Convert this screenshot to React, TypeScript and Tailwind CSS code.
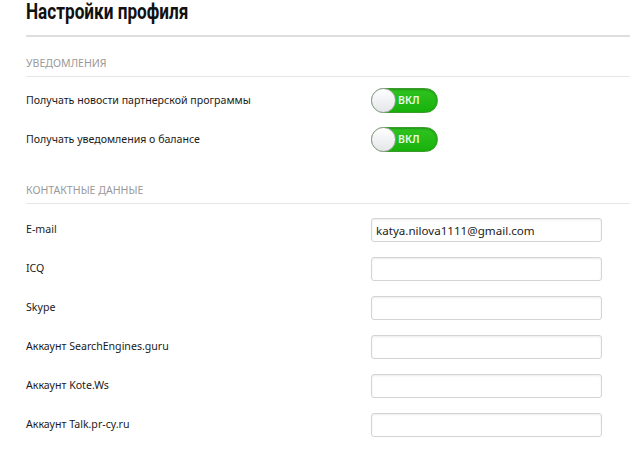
const fields = [
  { label: "E-mail", value: "katya.nilova1111@gmail.com" },
  { label: "ICQ", value: "" },
  { label: "Skype", value: "" },
  { label: "Аккаунт SearchEngines.guru", value: "" },
  { label: "Аккаунт Kote.Ws", value: "" },
  { label: "Аккаунт Talk.pr-cy.ru", value: "" },
];

function Toggle() {
  return (
    <div className="relative w-[67px] h-[25px] rounded-full border border-[#3a9a2c] bg-gradient-to-b from-[#2fc41f] to-[#17b10a] shadow-[inset_0_1px_2px_rgba(0,0,0,0.25)]">
      <div className="absolute left-[-1px] top-[-1px] w-[25px] h-[25px] rounded-full border border-[#9aa49a] bg-gradient-to-b from-[#ffffff] to-[#e4e6e8]" />
      <span className="absolute left-[26px] top-0 h-full flex items-center text-[10.5px] font-semibold text-[#eefbe8]">
        ВКЛ
      </span>
    </div>
  );
}

export default function App() {
  return (
    <div className="w-[630px] h-[470px] overflow-hidden bg-white pl-[26px] text-[#222] font-['Noto_Sans',sans-serif]">
      {/* Header */}
      <h1 className="h-[22px] text-[22px] leading-[23px] font-bold text-[#111] font-['Roboto',sans-serif]">
        <span className="inline-block origin-left scale-x-[0.78]">Настройки профиля</span>
      </h1>
      <div className="mt-[13px] h-[2px] bg-[#dedede]" />

      {/* Notifications */}
      <div className="pt-[19px] pb-[6px] text-[10.6px] leading-[14px] uppercase text-[#9a9a9a]">
        Уведомления
      </div>
      <div className="h-px bg-[#e6e6e6]" />
      <div className="mt-[11px] flex flex-col gap-[14px]">
        {["Получать новости партнерской программы", "Получать уведомления о балансе"].map((t) => (
          <div key={t} className="flex items-center h-[25px]">
            <div className="w-[345px] text-[10.6px] text-[#1a1a1a]">{t}</div>
            <Toggle />
          </div>
        ))}
      </div>

      {/* Contacts */}
      <div className="pt-[31px] pb-[6px] text-[10.6px] leading-[14px] uppercase text-[#9a9a9a]">
        Контактные данные
      </div>
      <div className="h-px bg-[#e6e6e6]" />
      <div className="mt-[14px] flex flex-col gap-[15px]">
        {fields.map((f) => (
          <div key={f.label} className="flex items-center h-[24px]">
            <div className="w-[345px] text-[10.6px] text-[#1a1a1a]">{f.label}</div>
            <input
              readOnly
              value={f.value}
              className="w-[231px] h-[24px] px-[4px] rounded-[3px] border border-[#d4d4d4] shadow-[inset_0_1px_2px_rgba(0,0,0,0.08)] text-[11.6px] text-[#222] outline-none font-['Noto_Sans',sans-serif]"
            />
          </div>
        ))}
      </div>
    </div>
  );
}
